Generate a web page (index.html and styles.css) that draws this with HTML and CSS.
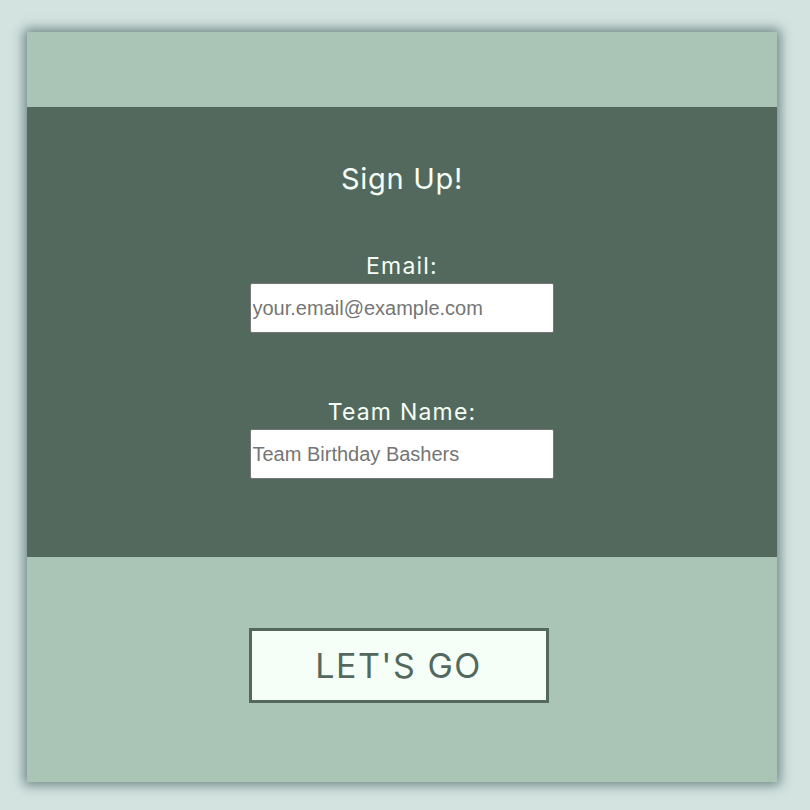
FILE: index.html
```html
<!DOCTYPE html>
<html>
<head>
<meta charset="utf-8">
<link rel="stylesheet" href="styles.css">
</head>
<body>
<div class="card">
  <div class="top"></div>
  <form class="form">
    <h1 class="title">Sign Up!</h1>
    <div class="field">
      <label class="label">Email:</label>
      <input class="input" type="text" placeholder="your.email@example.com">
    </div>
    <div class="field">
      <label class="label">Team Name:</label>
      <input class="input" type="text" placeholder="Team Birthday Bashers">
    </div>
  </form>
  <div class="bottom">
    <button class="btn" type="button">LET'S GO</button>
  </div>
</div>
</body>
</html>
```

FILE: styles.css
```css
html, body {
  margin: 0;
  padding: 0;
}
body {
  background: #d3e3e0;
  width: 810px;
  height: 810px;
  padding-top: 32px;
  box-sizing: border-box;
  font-family: "Inter", "Open Sans", sans-serif;
}
.card {
  width: 750px;
  height: 750px;
  margin-left: 27px;
  display: flex;
  flex-direction: column;
  box-shadow: 0 0 11px 3px rgba(40, 70, 70, 0.6);
}
.top {
  height: 75px;
  background: #aac4b5;
}
.form {
  height: 450px;
  background: #53695e;
  margin: 0;
  display: flex;
  flex-direction: column;
  align-items: center;
  box-sizing: border-box;
  padding-top: 52px;
}
.title {
  margin: 0;
  font-size: 29px;
  font-weight: 400;
  color: #f5fff8;
  line-height: 40px;
  letter-spacing: 0.7px;
}
.field {
  display: flex;
  flex-direction: column;
  align-items: center;
  margin-top: 52px;
}
.field + .field {
  margin-top: 64px;
}
.label {
  font-size: 23px;
  color: #f5fff8;
  line-height: 30px;
  margin-bottom: 2px;
  letter-spacing: 1.2px;
}
.input {
  width: 304px;
  height: 50px;
  box-sizing: border-box;
  border: 1px solid #777;
  border-radius: 2px;
  background: #fff;
  padding: 0 2px;
  font-family: "Liberation Sans", Arial, sans-serif;
  font-size: 20px;
  margin-left: -1px;
}
.input::placeholder {
  color: #757575;
}
.bottom {
  flex: 1;
  background: #aac4b5;
  display: flex;
  justify-content: center;
  padding-top: 71px;
  box-sizing: border-box;
}
.btn {
  width: 300px;
  height: 75px;
  box-sizing: border-box;
  border: 3px solid #53695e;
  background: #f5fff8;
  color: #53695e;
  font-family: "Inter", "Open Sans", sans-serif;
  font-size: 34px;
  letter-spacing: 1.5px;
  margin-left: -7px;
  cursor: pointer;
}
```
